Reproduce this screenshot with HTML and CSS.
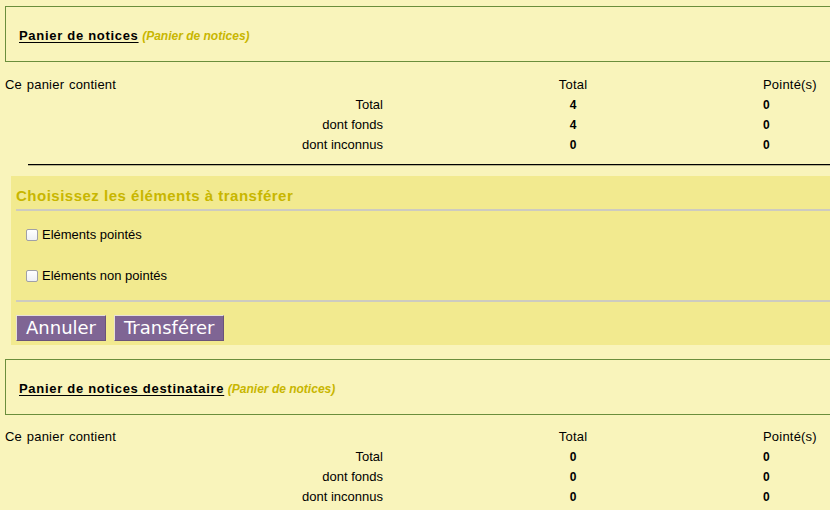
FILE: index.html
```html
<!DOCTYPE html>
<html lang="fr">
<head>
<meta charset="utf-8">
<title>Transfert de panier</title>
<link rel="stylesheet" href="styles.css">
</head>
<body>
<div class="page">
  <div class="cart-box">
    <a class="cart-name" href="#">Panier de notices</a> <span class="cart-type">(Panier de notices)</span>
  </div>
  <div class="stats first">
    <div class="c-intro">Ce panier contient</div><div class="c-head">Total</div><div class="c-last">Pointé(s)</div>
    <div class="c-label">Total</div><div class="c-num">4</div><div class="c-last num">0</div>
    <div class="c-label">dont fonds</div><div class="c-num">4</div><div class="c-last num">0</div>
    <div class="c-label">dont inconnus</div><div class="c-num">0</div><div class="c-last num">0</div>
  </div>
  <div class="rule"></div>
  <form class="panel">
    <h3 class="panel-title">Choisissez les éléments à transférer</h3>
    <div class="panel-body">
      <label class="check-row"><input type="checkbox" class="chk">Eléments pointés</label>
      <label class="check-row"><input type="checkbox" class="chk">Eléments non pointés</label>
    </div>
    <div class="actions">
      <button type="button" class="btn">Annuler</button>
      <button type="button" class="btn">Transférer</button>
    </div>
  </form>
  <div class="cart-box second">
    <a class="cart-name" href="#">Panier de notices destinataire</a> <span class="cart-type">(Panier de notices)</span>
  </div>
  <div class="stats">
    <div class="c-intro">Ce panier contient</div><div class="c-head">Total</div><div class="c-last">Pointé(s)</div>
    <div class="c-label">Total</div><div class="c-num">0</div><div class="c-last num">0</div>
    <div class="c-label">dont fonds</div><div class="c-num">0</div><div class="c-last num">0</div>
    <div class="c-label">dont inconnus</div><div class="c-num">0</div><div class="c-last num">0</div>
  </div>
</div>
</body>
</html>
```

FILE: styles.css
```css
html, body {
  margin: 0;
  padding: 0;
  background: #f9f4bb;
  overflow: hidden;
}
body {
  font-family: "Liberation Sans", Arial, sans-serif;
  font-size: 13px;
  color: #000;
}
.page {
  width: 1100px;
  padding: 6px 0 0 5px;
}
.cart-box {
  border: 1px solid #6b8e3c;
  box-sizing: border-box;
  height: 56px;
  padding: 21px 0 0 13px;
  line-height: 16px;
}
.cart-box.second {
  margin-top: 14px;
}
.cart-name {
  font-weight: bold;
  font-size: 13px;
  letter-spacing: 0.7px;
  color: #000;
  text-decoration: underline;
  text-underline-offset: 2px;
}
.cart-type {
  font-weight: bold;
  font-style: italic;
  font-size: 12px;
  color: #c8b600;
}
.stats {
  margin-top: 12px;
  display: grid;
  grid-template-columns: 378px 380px 1fr;
  line-height: 20px;
}
.stats.first {
  margin-top: 13px;
}
.c-intro { text-align: left; word-spacing: 1px; letter-spacing: 0.2px; }
.c-label { text-align: right; }
.c-head, .c-num { text-align: center; }
.c-head { letter-spacing: 0.2px; }
.c-num, .num { font-weight: bold; font-size: 12px; }
.c-last { text-align: left; letter-spacing: 0.2px; }
.rule {
  margin: 9px 0 0 23px;
  border-top: 1px solid #000;
  border-bottom: 1px solid #b8b48a;
}
.panel {
  margin: 10px 0 0 6px;
  background: #f2ea8f;
  padding: 0 0 4px 5px;
}
.panel-title {
  margin: 0;
  padding: 11px 0 4px 0;
  font-size: 15px;
  line-height: 18px;
  font-weight: bold;
  letter-spacing: 0.5px;
  color: #c8b600;
  border-bottom: 2px solid #cdcbc0;
}
.panel-body {
  padding: 16px 0 16px 9px;
  display: flex;
  flex-direction: column;
  gap: 25px;
  border-bottom: 2px solid #cdcbc0;
}
.check-row {
  display: flex;
  align-items: center;
  height: 16px;
  line-height: 16px;
}
.chk {
  appearance: none;
  -webkit-appearance: none;
  width: 12px;
  height: 12px;
  margin: 0 4px 0 1px;
  box-sizing: border-box;
  border: 1px solid #a0a0a8;
  border-radius: 2px;
  background: linear-gradient(#ffffff, #eef0f4);
}
.actions {
  padding-top: 13px;
  display: flex;
  gap: 8px;
}
.btn {
  font-family: "DejaVu Sans", sans-serif;
  font-size: 18px;
  line-height: 22px;
  height: 26px;
  box-sizing: border-box;
  padding: 0 9px;
  margin: 0;
  color: #fff;
  background: #7f6594;
  border: 1px solid;
  border-color: #e6e0d8 #6a5478 #6a5478 #e6e0d8;
}
```
